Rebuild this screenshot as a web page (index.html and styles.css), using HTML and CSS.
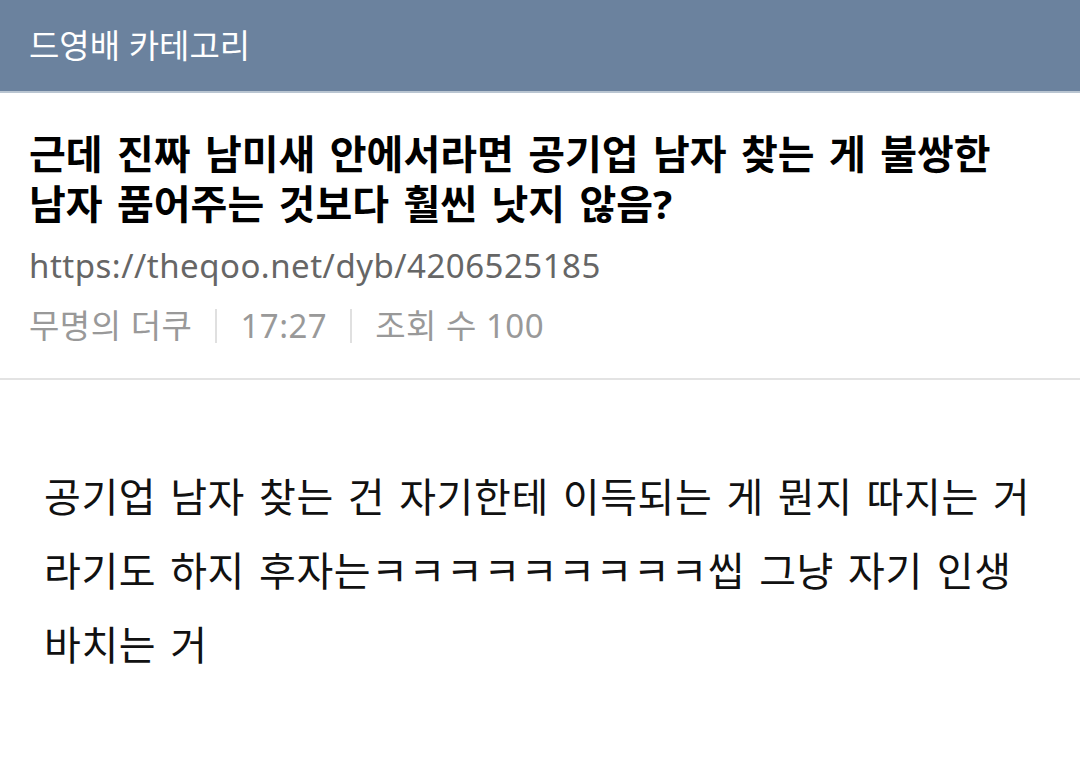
FILE: index.html
```html
<!DOCTYPE html>
<html lang="ko">
<head>
  <meta charset="UTF-8" />
  <meta name="viewport" content="width=device-width, initial-scale=1.0" />
  <title>드영배 카테고리</title>
  <link rel="stylesheet" href="styles.css">
</head>
<body>
  <header class="topbar">드영배 카테고리</header>

  <div class="post-head">
    <h1 class="post-title">근데 진짜 남미새 안에서라면 공기업 남자 찾는 게 불쌍한 남자 품어주는 것보다 훨씬 낫지 않음?</h1>
    <div class="post-url">https://theqoo.net/dyb/4206525185</div>
    <div class="post-meta">
      <span>무명의 더쿠</span>
      <span class="sep"></span>
      <span>17:27</span>
      <span class="sep"></span>
      <span>조회 수 100</span>
    </div>
  </div>

  <div class="post-body">
    <p>공기업 남자 찾는 건 자기한테 이득되는 게 뭔지 따지는 거라기도 하지 후자는ㅋㅋㅋㅋㅋㅋㅋㅋㅋ씹 그냥 자기 인생 바치는 거</p>
  </div>
</body>
</html>
```

FILE: styles.css
```css
body {
  margin: 0;
  font-family: "Noto Sans", "Noto Sans CJK KR", sans-serif;
  background: #fff;
  color: #111;
}
.topbar {
  height: 93px;
  box-sizing: border-box;
  background: #6b829e;
  border-bottom: 2px solid #b9c5d1;
  color: #fff;
  font-size: 33px;
  line-height: 92px;
  padding-left: 29px;
}
.post-head {
  padding: 36px 29px 27px;
  border-bottom: 2px solid #e3e3e3;
}
.post-title {
  margin: 0;
  font-size: 40px;
  line-height: 50px;
  font-weight: 700;
  word-spacing: 4px;
  word-break: keep-all;
  color: #000;
}
.post-url {
  margin-top: 12px;
  font-size: 33px;
  line-height: 50px;
  letter-spacing: 0.5px;
  color: #666;
}
.post-meta {
  margin-top: 10px;
  display: flex;
  align-items: center;
  gap: 23px;
  font-size: 33px;
  line-height: 50px;
  letter-spacing: 0.5px;
  color: #999;
}
.sep {
  width: 2px;
  height: 34px;
  background: #e0e0e0;
}
.post-body {
  padding: 80px 30px 0 44px;
}
.post-body p {
  margin: 0;
  font-size: 40px;
  line-height: 74px;
  letter-spacing: 0.6px;
  word-spacing: 3px;
  color: #111;
}
```
